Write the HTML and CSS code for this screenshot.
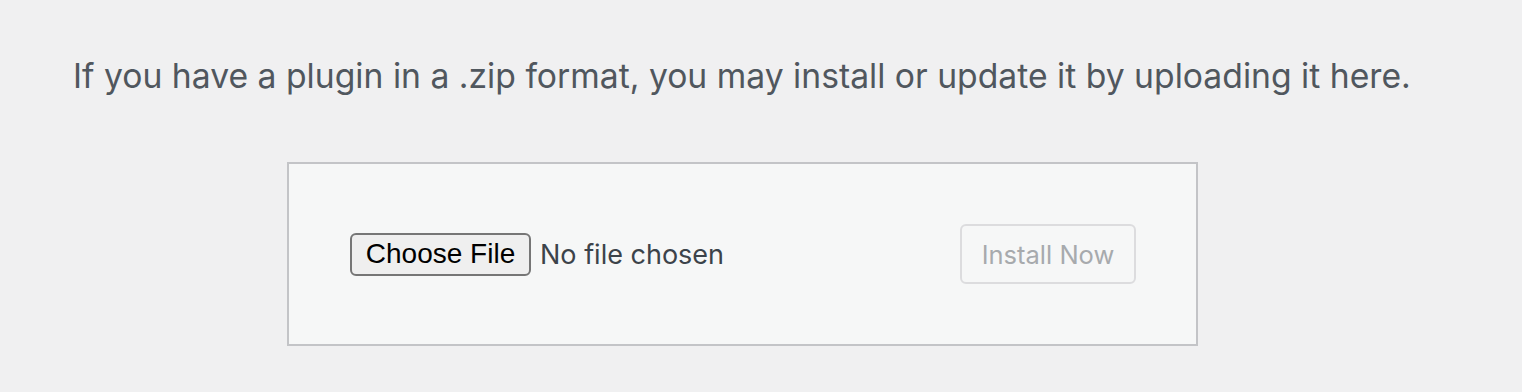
FILE: index.html
```html
<!DOCTYPE html>
<html>
<head>
<meta charset="utf-8">
<link rel="stylesheet" href="styles.css">
</head>
<body>
<p class="intro">If you have a plugin in a .zip format, you may install or update it by uploading it here.</p>
<form class="upload-box">
  <div class="file-field">
    <span class="choose-btn">Choose File</span>
    <span class="file-name">No file chosen</span>
  </div>
  <span class="install-btn">Install Now</span>
</form>
</body>
</html>
```
FILE: styles.css
```css
html, body {
  margin: 0;
  padding: 0;
  background: #f0f0f1;
}
body {
  font-family: Inter, "Noto Sans", sans-serif;
  color: #50575e;
}
.intro {
  margin: 0;
  padding: 56px 0 0 73px;
  font-size: 33.7px;
  line-height: 40px;
  color: #50575e;
  white-space: nowrap;
}
.upload-box {
  box-sizing: border-box;
  margin: 66px 0 0 287px;
  width: 911px;
  height: 184px;
  border: 2px solid #c3c4c7;
  background: #f6f7f7;
  display: flex;
  align-items: center;
  justify-content: space-between;
  padding: 0 60px 0 61px;
}
.file-field {
  display: flex;
  align-items: center;
  gap: 9px;
}
.choose-btn {
  box-sizing: border-box;
  height: 43px;
  width: 181px;
  border: 2px solid #767676;
  border-radius: 6px;
  background: #efefef;
  color: #000;
  font-family: "Liberation Sans", Arial, sans-serif;
  font-size: 28px;
  display: flex;
  align-items: center;
  justify-content: center;
}
.file-name {
  font-size: 27px;
  color: #3c434a;
}
.install-btn {
  box-sizing: border-box;
  width: 176px;
  height: 60px;
  border: 2px solid #dcdcde;
  border-radius: 6px;
  color: #a7aaad;
  font-size: 25.5px;
  display: flex;
  align-items: center;
  justify-content: center;
}
```
